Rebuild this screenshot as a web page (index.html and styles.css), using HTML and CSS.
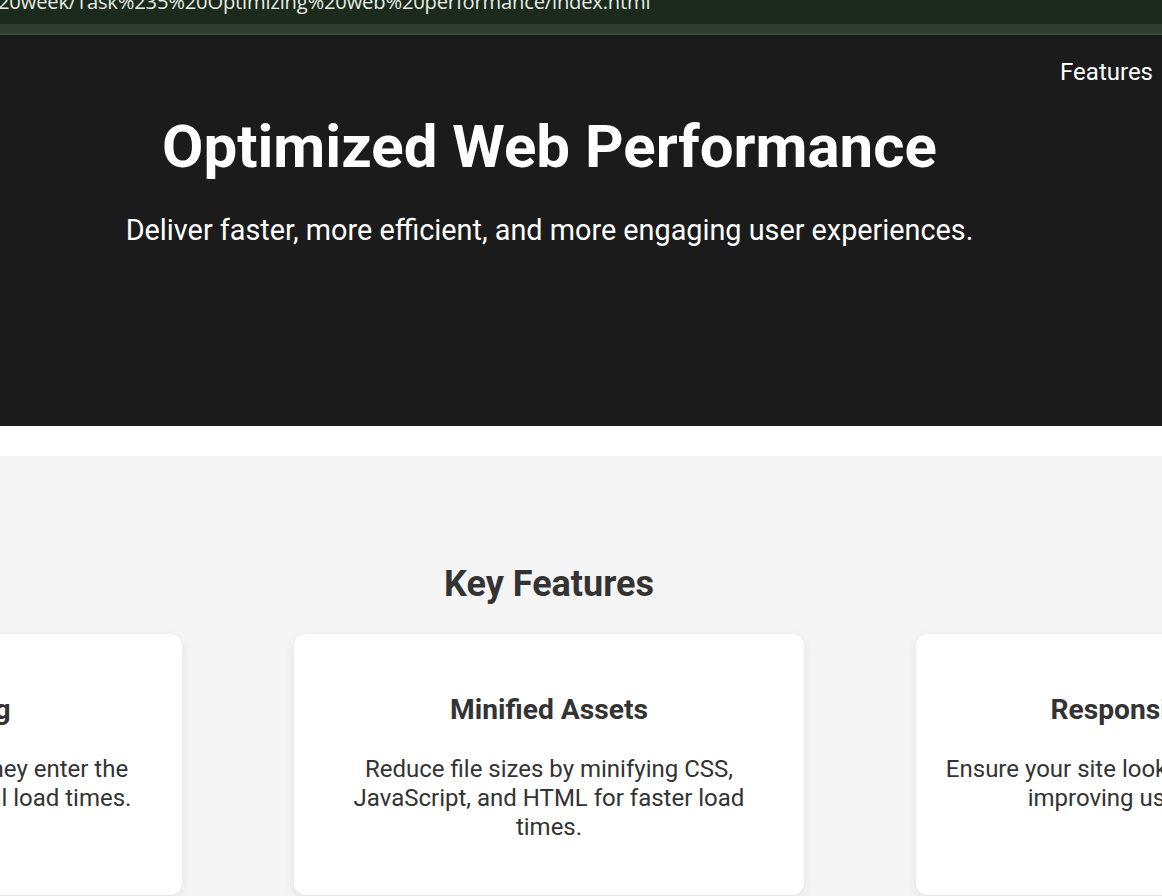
FILE: index.html
```html
<!DOCTYPE html>
<html lang="en">
<head>
<meta charset="utf-8">
<title>Optimized Web Performance</title>
<link rel="stylesheet" href="styles.css">
</head>
<body>
<div class="browser">
  <div class="urlbar"><span class="url">20week/Task%235%20Optimizing%20web%20performance/index.html</span></div>
  <div class="toolbar"></div>
</div>
<header class="hero">
  <nav class="nav"><a class="nav-link" href="#features">Features</a></nav>
  <div class="hero-inner">
    <h1 class="hero-title">Optimized Web Performance</h1>
    <p class="hero-sub">Deliver faster, more efficient, and more engaging user experiences.</p>
  </div>
</header>
<div class="spacer"></div>
<section class="features" id="features">
  <div class="features-inner">
    <h2 class="features-title">Key Features</h2>
    <div class="cards">
      <div class="card">
        <h3 class="card-title">Lazy Loading</h3>
        <p class="card-text">Load images only when they enter the viewport, improving overall load times.</p>
      </div>
      <div class="card">
        <h3 class="card-title">Minified Assets</h3>
        <p class="card-text">Reduce file sizes by minifying CSS, JavaScript, and HTML for faster load times.</p>
      </div>
      <div class="card">
        <h3 class="card-title">Responsive Design</h3>
        <p class="card-text">Ensure your site looks great on all devices, improving user experience.</p>
      </div>
    </div>
  </div>
</section>
</body>
</html>
```
FILE: styles.css
```css
html, body {
  margin: 0;
  padding: 0;
}
body {
  width: 1162px;
  height: 896px;
  overflow: hidden;
  font-family: Roboto, "Liberation Sans", sans-serif;
  background: #ffffff;
}
.browser {
  display: flex;
  flex-direction: column;
}
.urlbar {
  height: 24px;
  background: #1b2a1c;
  overflow: hidden;
  display: flex;
  align-items: flex-end;
}
.url {
  font-family: "Open Sans", "Noto Sans", sans-serif;
  font-size: 20.2px;
  line-height: 24px;
  color: #e6ece4;
  white-space: nowrap;
  margin-bottom: 11px;
  margin-left: -2px;
  letter-spacing: -0.2px;
}
.toolbar {
  height: 9px;
  background: #2e3d2d;
  border-bottom: 2px solid #3a4a39;
}
.hero {
  background: #1b1b1b;
  color: #ffffff;
  height: 391px;
  display: flex;
  flex-direction: column;
}
.nav {
  display: flex;
  justify-content: flex-end;
  padding: 23px 9px 0 0;
}
.nav-link {
  color: #ffffff;
  text-decoration: none;
  font-size: 24px;
}
.hero-inner {
  width: 1099px;
  text-align: center;
}
.hero-title {
  margin: 25px 0 0;
  font-size: 60px;
  font-weight: 700;
}
.hero-sub {
  margin: 31px 0 0;
  font-size: 28.8px;
}
.spacer {
  height: 30px;
}
.features {
  background: #f5f5f5;
  height: 440px;
}
.features-inner {
  width: 1098px;
  display: flex;
  flex-direction: column;
  align-items: center;
  padding-top: 107px;
}
.features-title {
  margin: 0;
  font-size: 36px;
  font-weight: 700;
  color: #333333;
}
.cards {
  display: flex;
  gap: 112px;
  margin-top: 29px;
}
.card {
  flex: 0 0 510px;
  box-sizing: border-box;
  height: 261px;
  background: #ffffff;
  border-radius: 12px;
  box-shadow: 0 4px 12px rgba(0, 0, 0, 0.08);
  padding: 59px 27px 0;
  text-align: center;
  color: #333333;
}
.card-title {
  margin: 0;
  font-size: 28.2px;
  font-weight: 700;
}
.card-text {
  margin: 29px 0 0;
  font-size: 24px;
  line-height: 28.8px;
}
```
